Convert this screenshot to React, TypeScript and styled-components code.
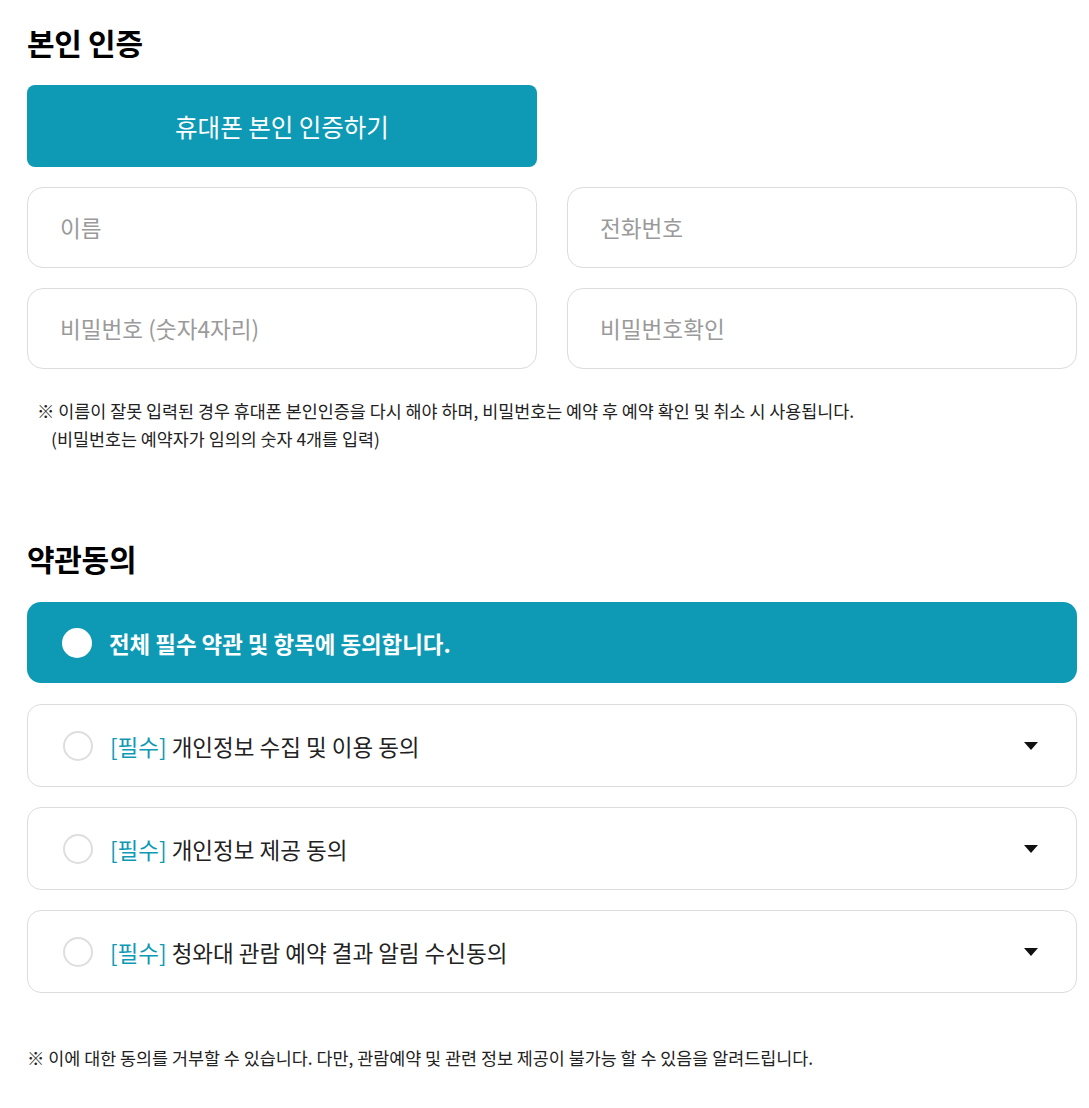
import React from 'react'
import styled, {createGlobalStyle} from 'styled-components'

const TEAL = '#0e9ab5'

const GlobalStyle = createGlobalStyle`
  body {
    margin: 0;
    background: #fff;
    font-family: "Noto Sans CJK KR", "Noto Sans", sans-serif;
    color: #111;
  }
`

interface iTerm {
  text: string
}

const terms: iTerm[] = [
  {text: '개인정보 수집 및 이용 동의'},
  {text: '개인정보 제공 동의'},
  {text: '청와대 관람 예약 결과 알림 수신동의'},
]

const App = () => {
  return (
    <Page>
      <GlobalStyle />
      <Title>본인 인증</Title>
      <CertButton type="button">휴대폰 본인 인증하기</CertButton>
      <Fields>
        <Field placeholder="이름" />
        <Field placeholder="전화번호" />
        <Field placeholder="비밀번호 (숫자4자리)" />
        <Field placeholder="비밀번호확인" />
      </Fields>
      <Notice>
        <p>※ 이름이 잘못 입력된 경우 휴대폰 본인인증을 다시 해야 하며, 비밀번호는 예약 후 예약 확인 및 취소 시 사용됩니다.</p>
        <Indent>(비밀번호는 예약자가 임의의 숫자 4개를 입력)</Indent>
      </Notice>

      <Title $gap>약관동의</Title>
      <TermList>
        <AllAgree>
          <Radio $on />
          <AllText>전체 필수 약관 및 항목에 동의합니다.</AllText>
        </AllAgree>
        {terms.map((t) => (
          <TermRow key={t.text}>
            <Radio />
            <TermText>
              <Req>[필수]</Req> {t.text}
            </TermText>
            <Caret viewBox="0 0 14 8" width="14" height="8">
              <polygon points="0,0 14,0 7,8" fill="#111" />
            </Caret>
          </TermRow>
        ))}
      </TermList>
      <Footnote>※ 이에 대한 동의를 거부할 수 있습니다. 다만, 관람예약 및 관련 정보 제공이 불가능 할 수 있음을 알려드립니다.</Footnote>
    </Page>
  )
}

export default App

const Page = styled.div`
  width: 1050px;
  padding: 22px 12px 40px 27px;
`
const Title = styled.h2<{$gap?: boolean}>`
  margin: ${(p) => (p.$gap ? '85px' : '0')} 0 0;
  font-size: 30px;
  line-height: 40px;
  font-weight: 700;
  color: #000;
  letter-spacing: -0.3px;
`
const CertButton = styled.button`
  display: flex;
  justify-content: center;
  align-items: center;
  margin-top: 23px;
  width: 510px;
  height: 82px;
  border: none;
  border-radius: 8px;
  background-color: ${TEAL};
  color: #fff;
  font-family: inherit;
  font-size: 24.5px;
  cursor: pointer;
`
const Fields = styled.div`
  display: grid;
  grid-template-columns: repeat(2, 510px);
  column-gap: 30px;
  row-gap: 20px;
  margin-top: 20px;
`
const Field = styled.input`
  box-sizing: border-box;
  height: 81px;
  padding: 0 32px;
  border: 1px solid #dcdcdc;
  border-radius: 16px;
  font-family: inherit;
  font-size: 22.6px;
  color: #222;
  outline: none;
  &::placeholder {
    color: #9a9a9a;
  }
`
const Notice = styled.div`
  margin-top: 28px;
  padding-left: 10px;
  font-size: 17.4px;
  line-height: 28px;
  color: #222;
  p {
    margin: 0;
  }
`
const Indent = styled.p`
  padding-left: 14px;
`
const TermList = styled.div`
  display: flex;
  flex-direction: column;
  gap: 20px;
  margin-top: 24px;
`
const Row = styled.div`
  box-sizing: border-box;
  display: flex;
  align-items: center;
  height: 83px;
  padding: 0 38px 0 35px;
  border-radius: 14px;
`
const AllAgree = styled(Row)`
  height: 81px;
  margin-bottom: 1px;
  background-color: ${TEAL};
`
const TermRow = styled(Row)`
  border: 1px solid #dcdcdc;
  background-color: #fff;
`
const Radio = styled.span<{$on?: boolean}>`
  box-sizing: border-box;
  flex: none;
  width: 30px;
  height: 30px;
  border-radius: 50%;
  background-color: #fff;
  border: ${(p) => (p.$on ? 'none' : '2px solid #dedede')};
`
const AllText = styled.span`
  margin-left: 17px;
  font-size: 22.4px;
  font-weight: 700;
  color: #fff;
`
const TermText = styled.span`
  flex: 1;
  margin-left: 17px;
  font-size: 22.5px;
  color: #222;
`
const Req = styled.span`
  color: ${TEAL};
`
const Caret = styled.svg`
  flex: none;
`
const Footnote = styled.p`
  margin: 51px 0 0;
  font-size: 17.4px;
  line-height: 28px;
  color: #222;
`
